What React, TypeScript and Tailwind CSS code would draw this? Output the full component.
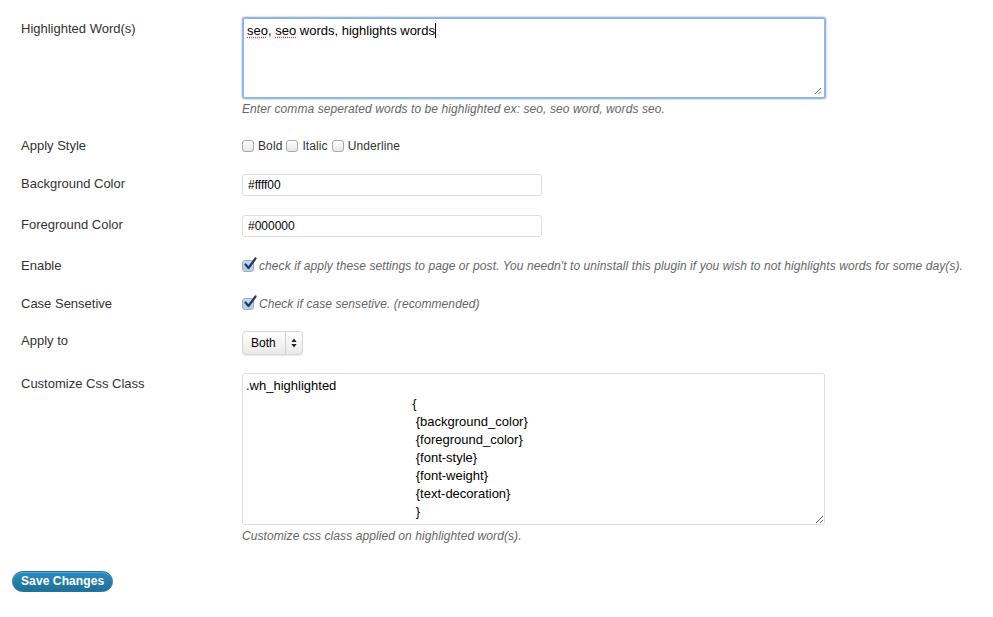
import React from 'react'

// WordPress-style settings page for a "highlight words" plugin

const Box = ({ checked = false }: { checked?: boolean }) => (
  <span className="relative inline-block w-[12px] h-[12px] rounded-[3px] border border-[#a9a9a9] bg-gradient-to-b from-white to-[#e6e6e6] shrink-0">
    {checked && <span className="absolute inset-0 rounded-[2px] bg-[#7fb2e8]/50" />}
    {checked && (
      <svg className="absolute -top-[4px] left-[0px] w-[14px] h-[14px]" viewBox="0 0 14 14">
        <path d="M2.5 7.5 L5.5 11 L12.5 1.5" fill="none" stroke="#1f3a66" strokeWidth="2.2" strokeLinecap="round" strokeLinejoin="round" />
      </svg>
    )}
  </span>
)

const Grip = () => (
  <svg className="absolute right-[2px] bottom-[2px] w-[9px] h-[9px]" viewBox="0 0 9 9">
    <path d="M8 2 L2 8 M8 5.5 L5.5 8" stroke="#777" strokeWidth="1" />
  </svg>
)

const Row = ({
  label,
  children,
  className = '',
  labelClass = '',
}: {
  label: string
  children: React.ReactNode
  className?: string
  labelClass?: string
}) => (
  <div className={`flex ${className}`}>
    <div className={`w-[242px] shrink-0 pl-[21px] ${labelClass}`}>{label}</div>
    <div className="flex-1">{children}</div>
  </div>
)

const desc = 'text-[12px] italic text-[#666] leading-[14px] tracking-[0.08px]'

const cssValue = [
  '.wh_highlighted',
  ' '.repeat(46) + '{',
  ' '.repeat(47) + '{background_color}',
  ' '.repeat(47) + '{foreground_color}',
  ' '.repeat(47) + '{font-style}',
  ' '.repeat(47) + '{font-weight}',
  ' '.repeat(47) + '{text-decoration}',
  ' '.repeat(47) + '}',
].join('\n')

export default function App() {
  return (
    <div
      className="w-[993px] h-[617px] bg-white text-[#333] text-[13px] pt-[17px]"
      style={{ fontFamily: '"Liberation Sans", Arial, sans-serif' }}
    >
      {/* Highlighted words */}
      <Row label="Highlighted Word(s)" labelClass="pt-[2px]">
        <div className="relative w-[584px] h-[82px] rounded-[3px] border-2 border-[#92b6e0] shadow-[0_0_2px_#7aa7dc] px-[3px] py-[3px] leading-[18px] text-[13px] text-black">
          <span className="underline decoration-dotted decoration-red-500 underline-offset-2">seo</span>,{' '}
          <span className="underline decoration-dotted decoration-red-500 underline-offset-2">seo</span> words, highlights words
          <span className="inline-block w-px h-[15px] bg-black align-[-3px]" />
          <Grip />
        </div>
        <div className={`${desc} mt-[3px]`}>Enter comma seperated words to be highlighted ex: seo, seo word, words seo.</div>
      </Row>

      {/* Apply style */}
      <Row label="Apply Style" className="mt-[20px] h-[20px] items-center">
        <div className="flex items-center gap-[4px] text-[12px] tracking-[0.1px]">
          <Box />
          <span>Bold</span>
          <Box />
          <span>Italic</span>
          <Box />
          <span>Underline</span>
        </div>
      </Row>

      <Row label="Background Color" className="mt-[18px] items-center" labelClass="-mt-[3px]">
        <div className="w-[300px] h-[22px] rounded-[3px] border border-[#dfdfdf] px-[5px] leading-[20px] text-[12px] text-black">#ffff00</div>
      </Row>

      <Row label="Foreground Color" className="mt-[19px] items-center" labelClass="-mt-[3px]">
        <div className="w-[300px] h-[22px] rounded-[3px] border border-[#dfdfdf] px-[5px] leading-[20px] text-[12px] text-black">#000000</div>
      </Row>

      <Row label="Enable" className="mt-[19px] h-[20px] items-center">
        <div className="flex items-center gap-[5px]">
          <Box checked />
          <span className={desc}>check if apply these settings to page or post. You needn't to uninstall this plugin if you wish to not highlights words for some day(s).</span>
        </div>
      </Row>

      <Row label="Case Sensetive" className="mt-[18px] h-[20px] items-center">
        <div className="flex items-center gap-[5px]">
          <Box checked />
          <span className={desc}>Check if case sensetive. (recommended)</span>
        </div>
      </Row>

      <Row label="Apply to" className="mt-[17px] items-center" labelClass="-mt-[4px]">
        <div className="flex items-stretch w-[61px] h-[24px] rounded-[4px] border border-[#d6d6d6] bg-gradient-to-b from-white to-[#e9e9e9] shadow-[0_1px_1px_rgba(0,0,0,0.08)] text-[12px] text-black">
          <span className="flex-1 pl-[8px] leading-[22px]">Both</span>
          <span className="w-[17px] border-l border-[#d0d0d0] flex items-center justify-center">
            <svg width="6" height="10" viewBox="0 0 6 10">
              <path d="M3 0.5 L5.6 4 L0.4 4 Z M3 9.5 L5.6 6 L0.4 6 Z" fill="#222" />
            </svg>
          </span>
        </div>
      </Row>

      <Row label="Customize Css Class" className="mt-[18px]" labelClass="pt-[1px]">
        <textarea
          readOnly
          spellCheck={false}
          defaultValue={cssValue}
          className="block w-[583px] h-[152px] rounded-[3px] border border-[#dfdfdf] px-[3px] py-[3px] leading-[18px] text-[13px] text-black whitespace-pre outline-none resize-y"
          style={{ fontFamily: '"Liberation Sans", Arial, sans-serif' }}
        />
        <div className={`${desc} mt-[4px]`}>Customize css class applied on highlighted word(s).</div>
      </Row>

      <div className="pl-[12px] mt-[28px]">
        <button className="h-[21px] px-[8px] rounded-full border border-[#21759b] bg-gradient-to-b from-[#2e8bbf] to-[#1f6f98] text-white text-[12px] font-bold leading-[19px] tracking-[0.1px] shadow-[inset_0_1px_0_rgba(120,200,230,0.5)]">
          Save Changes
        </button>
      </div>
    </div>
  )
}
